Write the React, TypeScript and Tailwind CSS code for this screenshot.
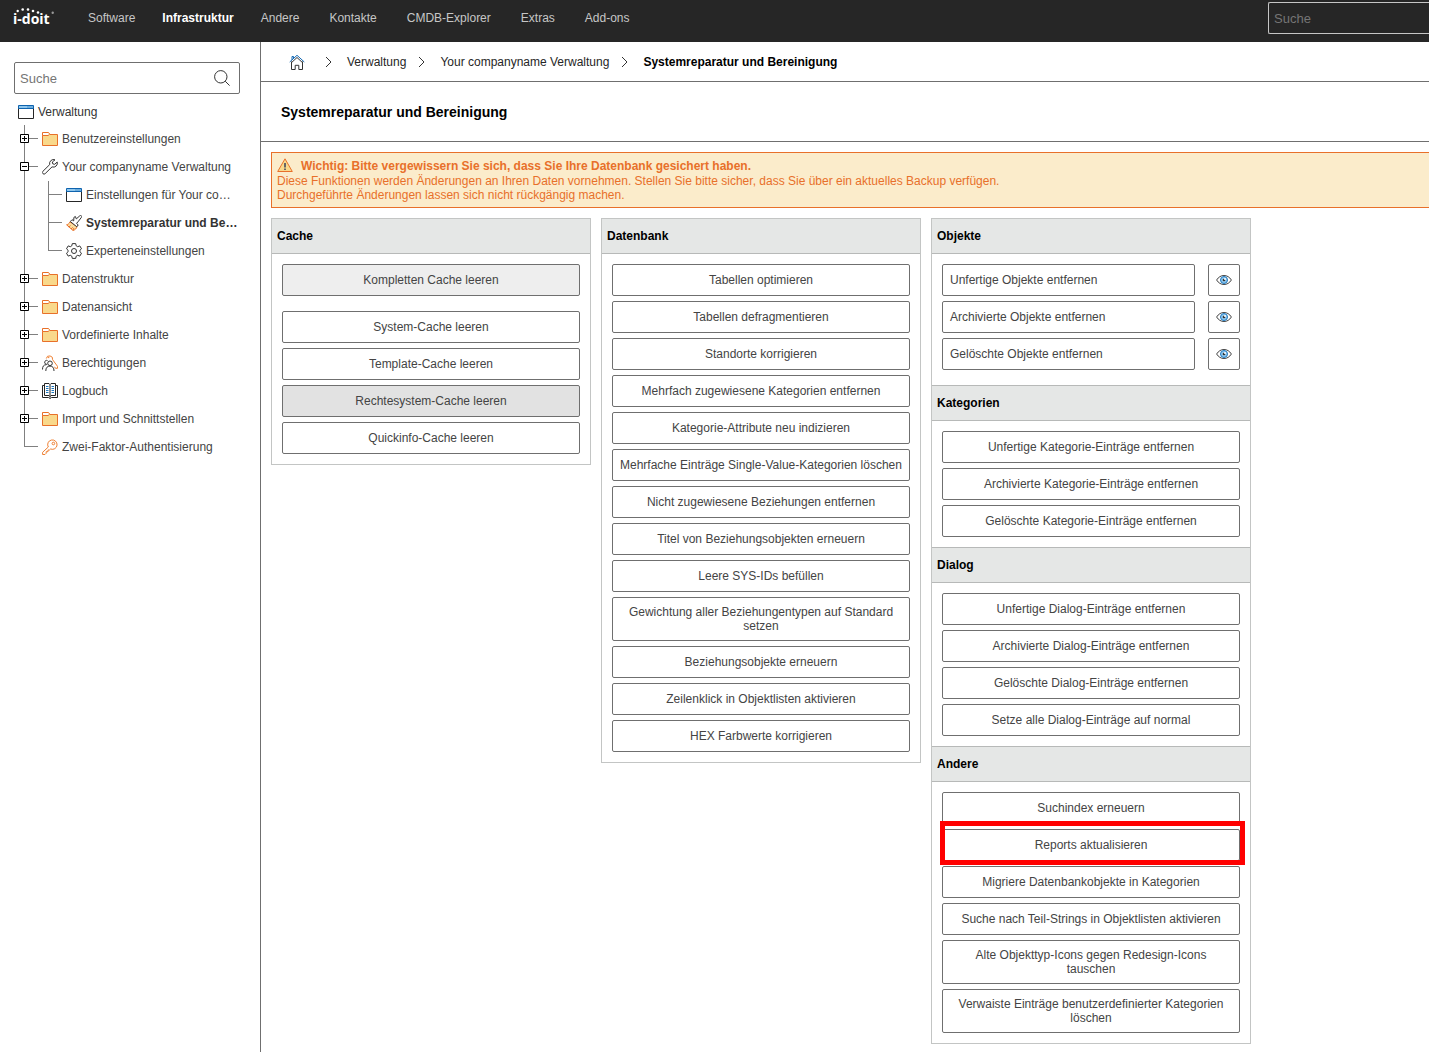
import clsx from "clsx";

interface TreeItem {
  label: string;
  icon: IconName;
  expander?: "plus" | "minus";
  active?: boolean;
  children?: TreeItem[];
}

interface PanelAction {
  label: string;
  tone?: "light" | "dark";
  marked?: boolean;
}

interface PanelSection {
  title: string;
  actions: PanelAction[];
}

const NAV_ITEMS = ["Software", "Infrastruktur", "Andere", "Kontakte", "CMDB-Explorer", "Extras", "Add-ons"];

const TREE: TreeItem[] = [
  { label: "Benutzereinstellungen", icon: "folder", expander: "plus" },
  {
    label: "Your companyname Verwaltung",
    icon: "wrench",
    expander: "minus",
    children: [
      { label: "Einstellungen für Your co…", icon: "window" },
      { label: "Systemreparatur und Be…", icon: "brush", active: true },
      { label: "Experteneinstellungen", icon: "gear" },
    ],
  },
  { label: "Datenstruktur", icon: "folder", expander: "plus" },
  { label: "Datenansicht", icon: "folder", expander: "plus" },
  { label: "Vordefinierte Inhalte", icon: "folder", expander: "plus" },
  { label: "Berechtigungen", icon: "people", expander: "plus" },
  { label: "Logbuch", icon: "book", expander: "plus" },
  { label: "Import und Schnittstellen", icon: "folder", expander: "plus" },
  { label: "Zwei-Faktor-Authentisierung", icon: "key" },
];

const CACHE_ACTIONS: PanelAction[] = [
  { label: "System-Cache leeren" },
  { label: "Template-Cache leeren" },
  { label: "Rechtesystem-Cache leeren", tone: "dark" },
  { label: "Quickinfo-Cache leeren" },
];

const DATABASE_ACTIONS: PanelAction[] = [
  { label: "Tabellen optimieren" },
  { label: "Tabellen defragmentieren" },
  { label: "Standorte korrigieren" },
  { label: "Mehrfach zugewiesene Kategorien entfernen" },
  { label: "Kategorie-Attribute neu indizieren" },
  { label: "Mehrfache Einträge Single-Value-Kategorien löschen" },
  { label: "Nicht zugewiesene Beziehungen entfernen" },
  { label: "Titel von Beziehungsobjekten erneuern" },
  { label: "Leere SYS-IDs befüllen" },
  { label: "Gewichtung aller Beziehungentypen auf Standard setzen" },
  { label: "Beziehungsobjekte erneuern" },
  { label: "Zeilenklick in Objektlisten aktivieren" },
  { label: "HEX Farbwerte korrigieren" },
];

const OBJECT_ACTIONS = ["Unfertige Objekte entfernen", "Archivierte Objekte entfernen", "Gelöschte Objekte entfernen"];

const OTHER_SECTIONS: PanelSection[] = [
  {
    title: "Kategorien",
    actions: [
      { label: "Unfertige Kategorie-Einträge entfernen" },
      { label: "Archivierte Kategorie-Einträge entfernen" },
      { label: "Gelöschte Kategorie-Einträge entfernen" },
    ],
  },
  {
    title: "Dialog",
    actions: [
      { label: "Unfertige Dialog-Einträge entfernen" },
      { label: "Archivierte Dialog-Einträge entfernen" },
      { label: "Gelöschte Dialog-Einträge entfernen" },
      { label: "Setze alle Dialog-Einträge auf normal" },
    ],
  },
  {
    title: "Andere",
    actions: [
      { label: "Suchindex erneuern" },
      { label: "Reports aktualisieren", marked: true },
      { label: "Migriere Datenbankobjekte in Kategorien" },
      { label: "Suche nach Teil-Strings in Objektlisten aktivieren" },
      { label: "Alte Objekttyp-Icons gegen Redesign-Icons tauschen" },
      { label: "Verwaiste Einträge benutzerdefinierter Kategorien löschen" },
    ],
  },
];

const ICONS = {
  folder: (
    <>
      <path d="M.5 4.5v-3h6l1.500 2h7.500v11H.5z" fill="#f9d98c" stroke="#e8702a" />
      <path d="M1 2h5.200l1 1.500L6 4.500H1z" fill="#fff" />
      <path d="M.5 4.500h5.500l1.500-1" stroke="#e8702a" />
    </>
  ),
  window: (
    <>
      <path d="M.5 4v10.500h15V4" fill="#fff" stroke="#262626" />
      <path d="M.5 1.500h15v3H.5z" fill="#8fc7ee" stroke="#0e63ae" />
      <path d="M9.500 3h1M11.500 3h1M13.500 3h1" stroke="#0e63ae" />
    </>
  ),
  wrench: (
    <path
      d="M13 .8a4 4 0 0 0-5.300 4.800L.9 12.300a1.600 1.600 0 0 0 0 2.300 1.600 1.600 0 0 0 2.300 0L10 7.900A4 4 0 0 0 15.200 3L12.700 5.300l-1.900-.4-.5-1.900z"
      stroke="#333"
    />
  ),
  brush: (
    <>
      <path d="M4 7C3.200 8.600 1.800 9.500.6 9.800L7 15.500c2.200-.6 3.500-2 4-4z" fill="#fbdfa0" stroke="#e8702a" />
      <path d="M2.800 12l1.700-1.400M5 14l1.700-1.700M7 15l1-2" stroke="#e8702a" />
      <path
        d="M4.300 6.500L6 4.700l1.700 1.200.2-3.500 1.500-.9.900 2.400L13.800.8a1.100 1.100 0 0 1 1.600 1.600L12 6.800l-1.500 1.600 1.700 1.500-1.400 1.900z"
        fill="#fff"
        stroke="#333"
      />
    </>
  ),
  gear: (
    <>
      <path
        d="M6.300.6h3.400l.5 2.200 1.500.9 2.100-.8 1.700 2.900L13.900 7.300v1.400l1.600 1.500-1.700 2.900-2.100-.8-1.500.9-.5 2.200H6.300l-.5-2.200-1.500-.9-2.100.8-1.700-2.900L2.100 8.700V7.300L.5 5.800l1.700-2.900 2.100.8 1.500-.9z"
        stroke="#333"
      />
      <circle cx="8" cy="8" r="2.500" stroke="#333" />
    </>
  ),
  people: (
    <>
      <path d="M4.300 3.500a3.200 3.200 0 0 1 6.300 1.200l4.900 6.600v2h-2l-1-1.500M5.800 2.600h1.500" stroke="#ef8033" />
      <circle cx="8" cy="8.300" r="2.300" stroke="#333" />
      <path d="M3.800 16c0-3.300 1.500-4.900 4.200-4.900s4 1.600 4 4.900M5 9.300a2 2 0 1 1 .5-3.800M.5 14.500c0-3.200 1.200-4.800 3.800-4.800" stroke="#333" />
    </>
  ),
  book: (
    <>
      <path d="M2.500 2.500h-2v12h6l1.500 1 1.500-1h6v-12h-2" stroke="#262626" />
      <path d="M8 1.500L7 .5H2.500v12H7l1 1 1-1h4.500V.5H9zM8 1.500v13" fill="#fff" stroke="#262626" />
      <path d="M4 3.500h2.500M4 5.500h2.500M4 7.500h2.500M4 9.500h2.500M9.500 3.500H12M9.500 5.500H12M9.500 7.500H12M9.500 9.500H12" stroke="#1c78c0" />
    </>
  ),
  key: (
    <>
      <path
        d="M6.300 8a4.700 4.700 0 1 1 2.300 2L7.500 11H6v1.700H4.200V14.300L3 15.500H.6v-2.200z"
        fill="#fff"
        stroke="#ef8033"
      />
      <circle cx="11.400" cy="4.500" r="1.300" stroke="#ef8033" />
    </>
  ),
  home: (
    <>
      <path d="M2.500 7.500v8h3.700v-4.200h3.600v4.200h3.700v-8" stroke="#333" />
      <path d="M3 6V2.500h1.500v2M.7 8L8 1.300 15.300 8" stroke="#1469b4" />
      <path d="M2.300 8.800L8 3.500l5.700 5.300" stroke="#333" />
    </>
  ),
  warning: (
    <>
      <path d="M8 .8L15.300 13.500H.7z" fill="#f9d98c" stroke="#e8702a" />
      <path d="M8 5v4.500M8 10.500v1.500" stroke="#666" strokeWidth="2" />
    </>
  ),
  eye: (
    <>
      <path d="M.6 8C2.500 5 5 3.500 8 3.500S13.500 5 15.400 8C13.500 11 11 12.500 8 12.500S2.500 11 .6 8z" fill="#fff" stroke="#444" />
      <circle cx="8" cy="8" r="3.500" fill="#8fc7ee" stroke="#1c78c0" />
      <circle cx="8" cy="8" r="1.300" fill="#333" />
      <circle cx="9" cy="7" r="1" fill="#fff" />
    </>
  ),
  search: (
    <>
      <circle cx="6.800" cy="6.800" r="6.200" stroke="#333" />
      <path d="M11.200 11.200l4.400 4.400" stroke="#333" />
    </>
  ),
};

type IconName = keyof typeof ICONS;

function Icon({ name }: { name: IconName }) {
  return (
    <svg viewBox="0 0 16 16" fill="none" className="w-4 h-4 shrink-0" aria-hidden="true">
      {ICONS[name]}
    </svg>
  );
}

function Logo() {
  return (
    <svg viewBox="0 0 44 20" className="w-11 h-5" role="img" aria-label="i-doit">
      <text x="0" y="18" fill="#fff" className="font-['Open_Sans',sans-serif] text-[14px] font-bold">
        i-doit
      </text>
      <g fill="#fff">
        <circle cx="4.700" cy="5" r="1.200" />
        <circle cx="9.700" cy="3.500" r="1.300" />
        <circle cx="15" cy="3.500" r="1.300" />
        <circle cx="20" cy="5" r="1.300" />
        <circle cx="25" cy="6.500" r="1.300" />
      </g>
      <circle cx="39.700" cy="6.700" r="1.200" fill="#999" />
    </svg>
  );
}

function Chevron() {
  return (
    <svg viewBox="0 0 7 12" fill="none" className="w-[7px] h-3 shrink-0" aria-hidden="true">
      <path d="M1 1l5 5-5 5" stroke="#333" />
    </svg>
  );
}

// one 24px wide cell of the tree's connector lines
function Guide({ branch, last }: { branch?: boolean; last?: boolean }) {
  return (
    <svg viewBox="0 0 24 28" fill="none" stroke="#808080" className="w-6 h-7 shrink-0" aria-hidden="true">
      <path d={last ? "M6.500 0v14" : "M6.500 0v28"} />
      {branch && <path d="M6 13.500h14" />}
    </svg>
  );
}

function Expander({ kind, label }: { kind: "plus" | "minus"; label: string }) {
  return (
    <button type="button" aria-label={label} aria-expanded={kind === "minus"} className="w-6 h-7 shrink-0 cursor-pointer">
      <svg viewBox="0 0 24 28" fill="none" className="w-6 h-7" aria-hidden="true">
        <path d="M6.500 0v28M6 13.500h14" stroke="#808080" />
        <path d="M2.500 9.500h8v8h-8z" fill="#fff" stroke="#000" />
        <path d={kind === "plus" ? "M4 13.500h5M6.500 11v5" : "M4 13.500h5"} stroke="#000" />
      </svg>
    </button>
  );
}

function TreeNode({ item, last, nested }: { item: TreeItem; last: boolean; nested?: boolean }) {
  return (
    <li>
      <div className="flex items-center h-7">
        {nested && <Guide />}
        {item.expander ? <Expander kind={item.expander} label={item.label} /> : <Guide branch last={last} />}
        <a
          href="#"
          className={clsx(
            "flex items-center gap-1 whitespace-nowrap",
            item.active ? "font-bold text-[#333]" : "text-[#444]"
          )}
        >
          <Icon name={item.icon} />
          {item.label}
        </a>
      </div>
      {item.children && (
        <ul>
          {item.children.map((child, i) => (
            <TreeNode key={child.label} item={child} last={i === item.children!.length - 1} nested />
          ))}
        </ul>
      )}
    </li>
  );
}

function SectionTitle({ children, divided }: { children: string; divided?: boolean }) {
  return (
    <h2
      className={clsx(
        "bg-[#e5e7e6] border-b border-[#b7b9b8] px-[5px] py-[10px] leading-[14px] font-bold text-black",
        divided && "border-t"
      )}
    >
      {children}
    </h2>
  );
}

function ActionButton({ action }: { action: PanelAction }) {
  return (
    <div className="relative">
      <button
        type="button"
        className={clsx(
          "block w-full min-h-8 border border-[#6f6f6f] rounded-xs p-[7px] leading-[14px] text-center text-[#444] cursor-pointer",
          action.tone === "light" && "bg-[#eee]",
          action.tone === "dark" && "bg-[#e2e2e2]",
          !action.tone && "bg-white"
        )}
      >
        {action.label}
      </button>
      {action.marked && (
        <div className="absolute -top-2 -bottom-1 -left-0.5 -right-[5px] z-10 border-5 border-[#f00] pointer-events-none" />
      )}
    </div>
  );
}

function ActionList({ actions }: { actions: PanelAction[] }) {
  return (
    <div className="flex flex-col gap-[5px] p-[10px]">
      {actions.map((action) => (
        <ActionButton key={action.label} action={action} />
      ))}
    </div>
  );
}

function Panel({ children }: { children: React.ReactNode }) {
  return <section className="w-80 shrink-0 border border-[#c3c5c4]">{children}</section>;
}

export default function App() {
  return (
    <div className="min-h-screen flex flex-col bg-white overflow-x-hidden font-['Liberation_Sans',Arial,sans-serif] text-xs text-[#333]">
      <header className="flex items-start h-[42px] bg-[#262626]">
        <a href="#" className="w-[88px] pl-[13px] pt-[6px]">
          <Logo />
        </a>
        <nav className="flex gap-[30px] leading-9">
          {NAV_ITEMS.map((item) => (
            <a
              key={item}
              href="#"
              className={item === "Infrastruktur" ? "-mx-[3px] font-bold text-white" : "text-[#c6c6c6]"}
            >
              {item}
            </a>
          ))}
        </nav>
        <input
          type="search"
          aria-label="Globale Suche"
          placeholder="Suche"
          className="ml-auto mt-0.5 w-[161px] h-8 px-[5px] border border-r-0 border-[#c6c6c6] rounded-l-xs bg-transparent text-[13px] text-white placeholder:text-[#757575]"
        />
      </header>

      <div className="flex flex-1">
        <aside className="w-[261px] shrink-0 border-r border-[#6f6f6f] pt-5">
          <label className="flex items-center ml-[14px] mr-5 h-8 pl-[5px] pr-[9px] border border-[#6f6f6f] rounded-xs">
            <input
              type="search"
              aria-label="Suche"
              placeholder="Suche"
              className="flex-1 min-w-0 h-full text-[13px] placeholder:text-[#757575] outline-none"
            />
            <Icon name="search" />
          </label>
          <div className="mt-1 pl-[18px] pr-5">
            <a href="#" className="flex items-center gap-1 h-[27px]">
              <Icon name="window" />
              Verwaltung
            </a>
            <ul>
              {TREE.map((item, i) => (
                <TreeNode key={item.label} item={item} last={i === TREE.length - 1} />
              ))}
            </ul>
          </div>
        </aside>

        <main className="flex-1 min-w-0">
          <nav aria-label="Breadcrumb" className="flex items-center h-10 pl-7 border-b border-[#6f6f6f] text-[#262626]">
            <a href="#" aria-label="Start" className="mr-5">
              <Icon name="home" />
            </a>
            <Chevron />
            <a href="#" className="ml-[15px] mr-3">
              Verwaltung
            </a>
            <Chevron />
            <a href="#" className="ml-[15px] mr-3">
              Your companyname Verwaltung
            </a>
            <Chevron />
            <span className="ml-[15px] font-bold text-black">Systemreparatur und Bereinigung</span>
          </nav>

          <div className="flex items-center h-[60px] pl-5 border-b border-[#6f6f6f]">
            <h1 className="text-sm font-bold text-black">Systemreparatur und Bereinigung</h1>
          </div>

          <div className="pt-[10px] pl-[10px]">
            <div role="alert" className="p-[5px] border border-r-0 border-[#e8702a] bg-[#fbeccb] leading-[14px] text-[#e8702a]">
              <p className="flex items-center gap-2 h-4 font-bold">
                <Icon name="warning" />
                Wichtig: Bitte vergewissern Sie sich, dass Sie Ihre Datenbank gesichert haben.
              </p>
              <p>
                Diese Funktionen werden Änderungen an Ihren Daten vornehmen. Stellen Sie bitte sicher, dass Sie über ein
                aktuelles Backup verfügen.
              </p>
              <p>Durchgeführte Änderungen lassen sich nicht rückgängig machen.</p>
            </div>

            <div className="flex items-start gap-[10px] mt-[10px]">
              <Panel>
                <SectionTitle>Cache</SectionTitle>
                <div className="px-[10px] pt-[10px] pb-[5px]">
                  <ActionButton action={{ label: "Kompletten Cache leeren", tone: "light" }} />
                </div>
                <ActionList actions={CACHE_ACTIONS} />
              </Panel>

              <Panel>
                <SectionTitle>Datenbank</SectionTitle>
                <ActionList actions={DATABASE_ACTIONS} />
              </Panel>

              <Panel>
                <SectionTitle>Objekte</SectionTitle>
                <div className="flex flex-col gap-[5px] px-[10px] pt-[10px] pb-[15px]">
                  {OBJECT_ACTIONS.map((label) => (
                    <div key={label} className="flex gap-[13px]">
                      <button
                        type="button"
                        className="flex-1 min-h-8 border border-[#6f6f6f] rounded-xs p-[7px] leading-[14px] text-left text-[#444] cursor-pointer"
                      >
                        {label}
                      </button>
                      <button
                        type="button"
                        aria-label={`${label} – Vorschau`}
                        className="flex items-center justify-center w-8 h-8 border border-[#6f6f6f] rounded-xs cursor-pointer"
                      >
                        <Icon name="eye" />
                      </button>
                    </div>
                  ))}
                </div>
                {OTHER_SECTIONS.map((section) => (
                  <div key={section.title}>
                    <SectionTitle divided>{section.title}</SectionTitle>
                    <ActionList actions={section.actions} />
                  </div>
                ))}
              </Panel>
            </div>
          </div>
        </main>
      </div>
    </div>
  );
}
